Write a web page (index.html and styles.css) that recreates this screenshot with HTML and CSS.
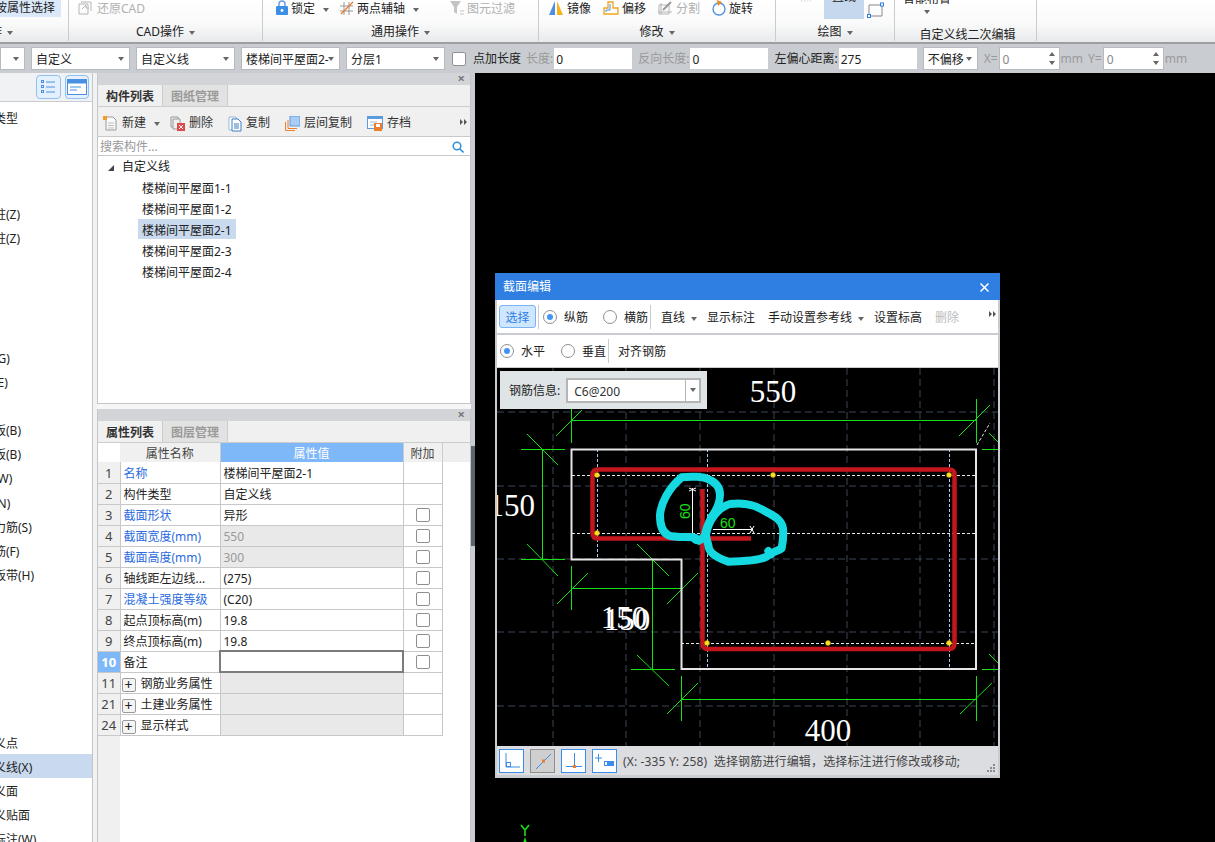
FILE: index.html
```html
<!DOCTYPE html>
<html lang="zh">
<head>
<meta charset="utf-8">
<title>截面编辑</title>
<link rel="stylesheet" href="styles.css">
</head>
<body>
<div class="app">
  <header class="ribbon">
    <section class="group g1">
      <div class="tools"><span class="hl-select">按属性选择</span></div>
      <div class="glabel glabel-left"><span class="cut">作</span><i class="caret"></i></div>
    </section>
    <section class="group g2">
      <div class="tools">
        <span class="tool off"><svg width="14" height="14" viewBox="0 0 14 14"><path d="M1 3h9v10H1zM3 1h10v9" fill="none" stroke="#b5b5b5"/><path d="M4 8l4-4v3h3" fill="none" stroke="#b5b5b5"/></svg>还原CAD</span>
      </div>
      <div class="glabel">CAD操作<i class="caret"></i></div>
    </section>
    <section class="group g3">
      <div class="tools">
        <span class="tool"><svg width="12" height="15" viewBox="0 0 12 15"><path d="M3 7V4a3 3 0 0 1 6 0v3" fill="none" stroke="#6f9fd8" stroke-width="1.5"/><rect y="6" width="12" height="9" rx="1" fill="#3d8fe6"/><circle cx="6" cy="10.5" r="1.4" fill="#fff"/></svg>锁定<i class="caret"></i></span>
        <span class="tool t-axis"><svg width="14" height="14" viewBox="0 0 14 14"><path d="M0 5h13M0 10h13M4 1v13M9 1v13" stroke="#999" fill="none"/><path d="M1 13L13 1" stroke="#e8792a" stroke-width="1.2"/></svg>两点辅轴<i class="caret"></i></span>
        <span class="tool off t-filter"><svg width="14" height="14" viewBox="0 0 14 14"><path d="M0 0h11L7 6v7l-3-2V6z" fill="#c4c4c4"/><path d="M10 10h4M10 13h4" stroke="#c4c4c4"/></svg>图元过滤</span>
      </div>
      <div class="glabel">通用操作<i class="caret"></i></div>
    </section>
    <section class="group g4">
      <div class="tools">
        <span class="tool"><svg width="16" height="15" viewBox="0 0 16 15"><path d="M7 1v14H1z" fill="#4a90e2"/><path d="M9 1v14h6z" fill="#f7b21c"/></svg>镜像</span>
        <span class="tool"><svg width="16" height="14" viewBox="0 0 16 14"><path d="M1 13V7h4V1h5v6h5v6z" fill="none" stroke="#f2a51d" stroke-width="1.3"/><path d="M3 11V9h4V3" fill="none" stroke="#4a90e2"/></svg>偏移</span>
        <span class="tool off"><svg width="15" height="14" viewBox="0 0 15 14"><path d="M1 4h10v9H1zM0 11h14M3 2v11" fill="none" stroke="#b5b5b5"/><path d="M5 9l8-8" stroke="#999" stroke-width="2"/></svg>分割</span>
        <span class="tool"><svg width="14" height="16" viewBox="0 0 14 16"><circle cx="7" cy="9" r="6" fill="none" stroke="#4a90e2" stroke-width="1.3"/><path d="M5 0l5 2-4 4z" fill="#f08a1d"/></svg>旋转</span>
      </div>
      <div class="glabel">修改<i class="caret"></i></div>
    </section>
    <section class="group g5">
      <div class="tools">
        <span class="faint"><span class="cut-text">点</span></span>
        <span class="hl-draw"><span class="cut-text">直线</span></span>
        <svg class="draw-rect" width="17" height="16" viewBox="0 0 17 16"><path d="M2 3h13v11H2z" fill="none" stroke="#888"/><rect x="13.500" y="1" width="3" height="3" fill="#fff" stroke="#2f7fe3"/><rect x="0.500" y="12.500" width="3" height="3" fill="#fff" stroke="#2f7fe3"/></svg>
      </div>
      <div class="glabel">绘图<i class="caret"></i></div>
    </section>
    <section class="group g6">
      <div class="cut-top">智能布置</div>
      <i class="caret caret-mid"></i>
      <div class="glabel glabel-low">自定义线二次编辑</div>
    </section>
    <div class="ribbon-rest"></div>
  </header>

  <div class="optbar">
    <div class="sel w25"><i class="caret"></i></div>
    <div class="sel w99">自定义<i class="caret"></i></div>
    <div class="sel w99">自定义线<i class="caret"></i></div>
    <div class="sel w99 nowrap">楼梯间平屋面2-<i class="caret"></i></div>
    <div class="sel w99">分层1<i class="caret"></i></div>
    <span class="check chk-opt"></span>
    <span class="olabel gap7">点加长度</span>
    <span class="olabel dim gap5">长度:</span>
    <span class="inp w78">0</span>
    <span class="olabel dim gap6">反向长度:</span>
    <span class="inp w78">0</span>
    <span class="olabel gap6">左偏心距离:</span>
    <span class="inp w78">275</span>
    <div class="sel w55 gap6">不偏移<i class="caret"></i></div>
    <span class="olabel dim gap6">X=</span>
    <span class="spin">0<i class="updown"></i></span>
    <span class="olabel dim">mm</span>
    <span class="olabel dim gap5">Y=</span>
    <span class="spin">0<i class="updown"></i></span>
    <span class="olabel dim">mm</span>
  </div>

  <main class="main">
    <aside class="nav">
      <div class="nav-head">
        <span class="nav-btn"><svg width="14" height="14" viewBox="0 0 14 14"><path d="M5 2h9M5 7h9M5 12h9" stroke="#4a90e2"/><rect x="0.500" y="0.500" width="2" height="2" fill="none" stroke="#4a90e2"/><rect x="0.500" y="5.500" width="2" height="2" fill="none" stroke="#4a90e2"/><rect x="0.500" y="10.500" width="2" height="2" fill="none" stroke="#4a90e2"/></svg></span>
        <span class="nav-btn"><svg width="20" height="16" viewBox="0 0 20 16"><rect x="0.500" y="0.500" width="19" height="15" fill="#fff" stroke="#4a90e2"/><rect x="0.500" y="0.500" width="19" height="4" fill="#4a90e2"/><path d="M3 8h11M3 11h7" stroke="#4a90e2"/></svg></span>
      </div>
      <ul class="nav-list">
        <li>类型</li><li></li><li></li><li></li>
        <li>柱(Z)</li><li>柱(Z)</li><li></li><li></li><li></li><li></li>
        <li>(G)</li><li>(E)</li><li></li>
        <li>板(B)</li><li>板(B)</li><li>(W)</li><li>(N)</li><li>力筋(S)</li><li>筋(F)</li><li>板带(H)</li>
        <li></li><li></li><li></li><li></li><li></li><li></li>
        <li>义点</li><li class="active">义线(X)</li><li>义面</li><li>义贴面</li><li>标注(W)</li>
      </ul>
    </aside>
    <div class="gutter"></div>

    <div class="panels">
      <section class="panel panel-top">
        <div class="panel-bar">×</div>
        <div class="tabs"><span class="tab on">构件列表</span><span class="tab">图纸管理</span></div>
        <div class="ptools">
          <span class="ptool"><svg width="14" height="15" viewBox="0 0 14 15"><path d="M3 1h7l3 3v10H3z" fill="#fafafa" stroke="#9a9a9a"/><path d="M5 7h6M5 9.500h6M5 12h6" stroke="#bbb"/><rect width="4" height="4" fill="#f39c2d"/></svg>新建<i class="caret"></i></span>
          <span class="ptool"><svg width="15" height="15" viewBox="0 0 15 15"><path d="M1 1h7v2M1 1v10h2" fill="none" stroke="#999"/><path d="M3 3h7v4M3 3v10h4" fill="none" stroke="#999"/><rect x="7" y="7" width="8" height="8" fill="#dd4a4a"/><path d="M9 9l4 4M13 9l-4 4" stroke="#fff"/></svg>删除</span>
          <span class="ptool"><svg width="14" height="16" viewBox="0 0 14 16"><path d="M1 1h7v13H1z" fill="#fff" stroke="#9bb8d8"/><path d="M4 3h6l3 3v9H4z" fill="#fff" stroke="#3d7fc8"/><path d="M6 8h5M6 10h5M6 12h5" stroke="#3d7fc8"/></svg>复制</span>
          <span class="ptool"><svg width="15" height="15" viewBox="0 0 15 15"><path d="M.5 6v8.500H10M3 4v8.500h9" fill="none" stroke="#ec7d2c"/><rect x="5" y="0" width="10" height="10" fill="#a9cdf5" stroke="#5b9be0"/></svg>层间复制</span>
          <span class="ptool"><svg width="16" height="15" viewBox="0 0 16 15"><rect x="0.500" y="0.500" width="15" height="12" fill="#fff" stroke="#5b9be0"/><path d="M0 1.500h16" stroke="#5b9be0" stroke-width="3"/><path d="M3 6h7M3 9h5" stroke="#9bb8d8"/><rect x="7" y="7" width="8" height="8" fill="#ec7d2c"/><rect x="9" y="8" width="4" height="3" fill="#fff"/></svg>存档</span>
          <svg class="more" width="7" height="6" viewBox="0 0 7 6"><path d="M0 0l3 3-3 3zM4 0l3 3-3 3z" fill="#555"/></svg>
        </div>
        <div class="search"><span>搜索构件...</span><svg width="12" height="12" viewBox="0 0 12 12"><circle cx="5" cy="5" r="3.800" fill="none" stroke="#2f8fd8" stroke-width="1.500"/><path d="M8 8l3.500 3.500" stroke="#2f8fd8" stroke-width="1.600"/></svg></div>
        <div class="tree">
          <div class="tree-root"><i class="tri"></i>自定义线</div>
          <div class="tree-item"><span>楼梯间平屋面1-1</span></div>
          <div class="tree-item"><span>楼梯间平屋面1-2</span></div>
          <div class="tree-item"><span class="picked">楼梯间平屋面2-1</span></div>
          <div class="tree-item"><span>楼梯间平屋面2-3</span></div>
          <div class="tree-item"><span>楼梯间平屋面2-4</span></div>
        </div>
      </section>

      <section class="panel panel-bottom">
        <div class="panel-bar">×</div>
        <div class="tabs"><span class="tab on">属性列表</span><span class="tab">图层管理</span></div>
        <div class="table-wrap">
          <table class="props">
            <thead><tr><th class="idx-h"></th><th class="c-name">属性名称</th><th class="c-val cur">属性值</th><th class="c-add">附加</th><th class="c-rest"></th></tr></thead>
            <tbody>
              <tr><td class="idx">1</td><td class="link">名称</td><td>楼梯间平屋面2-1</td><td></td></tr>
              <tr><td class="idx">2</td><td>构件类型</td><td>自定义线</td><td></td></tr>
              <tr><td class="idx">3</td><td class="link">截面形状</td><td>异形</td><td class="ck"><span class="check"></span></td></tr>
              <tr><td class="idx">4</td><td class="link">截面宽度(mm)</td><td class="ro">550</td><td class="ck"><span class="check"></span></td></tr>
              <tr><td class="idx">5</td><td class="link">截面高度(mm)</td><td class="ro">300</td><td class="ck"><span class="check"></span></td></tr>
              <tr><td class="idx">6</td><td>轴线距左边线...</td><td>(275)</td><td class="ck"><span class="check"></span></td></tr>
              <tr><td class="idx">7</td><td class="link">混凝土强度等级</td><td>(C20)</td><td class="ck"><span class="check"></span></td></tr>
              <tr><td class="idx">8</td><td>起点顶标高(m)</td><td>19.8</td><td class="ck"><span class="check"></span></td></tr>
              <tr><td class="idx">9</td><td>终点顶标高(m)</td><td>19.8</td><td class="ck"><span class="check"></span></td></tr>
              <tr><td class="idx cur-idx">10</td><td>备注</td><td class="editing"></td><td class="ck"><span class="check"></span></td></tr>
              <tr><td class="idx">11</td><td class="grp"><i class="plus">+</i>钢筋业务属性</td><td class="ro"></td><td></td></tr>
              <tr><td class="idx">21</td><td class="grp"><i class="plus">+</i>土建业务属性</td><td class="ro"></td><td></td></tr>
              <tr><td class="idx">24</td><td class="grp"><i class="plus">+</i>显示样式</td><td class="ro"></td><td></td></tr>
            </tbody>
          </table>
        </div>
      </section>
    </div>

    <div class="splitter"><i class="split-handle"></i></div>

    <div class="viewport">
      <svg class="axis" width="20" height="22" viewBox="0 0 20 22"><path d="M5 1l4 5 4-5M9 6v6" fill="none" stroke="#18e018" stroke-width="1.600"/><path d="M9 13l3 9H6z" fill="#18e018"/></svg>
    </div>
  </main>
</div>

<div class="dialog">
  <div class="dlg-title"><span>截面编辑</span><svg width="9" height="9" viewBox="0 0 9 9"><path d="M.5.500l8 8M8.500.500l-8 8" stroke="#fff" stroke-width="1.500"/></svg></div>
  <div class="dlg-bar bar-one">
    <span class="btn-sel">选择</span><i class="vsep"></i>
    <span class="radio on r-a"></span><span class="rtext">纵筋</span>
    <span class="radio r-b"></span><span class="rtext">横筋</span><i class="vsep s2"></i>
    <span class="act a-line">直线<i class="caret"></i></span>
    <span class="act a-show">显示标注</span>
    <span class="act a-hand">手动设置参考线<i class="caret"></i></span>
    <span class="act a-set">设置标高</span>
    <span class="act a-del">删除</span>
    <svg class="more dlg-more" width="7" height="6" viewBox="0 0 7 6"><path d="M0 0l3 3-3 3zM4 0l3 3-3 3z" fill="#555"/></svg>
  </div>
  <div class="dlg-bar bar-two">
    <span class="radio on r-c"></span><span class="rtext">水平</span>
    <span class="radio r-d"></span><span class="rtext">垂直</span><i class="vsep s2"></i>
    <span class="act a-align">对齐钢筋</span>
  </div>
  <div class="dlg-canvas">
    <svg class="drawing" width="501" height="378" viewBox="497 368 501 378">
      <g class="grid">
        <path d="M553 368V746M626 368V746M700 368V746M774 368V746M847 368V746M920 368V746M994 368V746M497 412H998M497 486H998M497 559H998M497 632H998M497 706H998"/>
      </g>
      <g class="guides">
        <path d="M572 475.500H975M572 533.500H975M681 643.500H975"/>
        <path class="blue" d="M597.500 449V559M707.500 449V669M949.500 449V669"/>
        <path d="M977 445L990 423"/>
      </g>
      <g class="dims">
        <path d="M571 420.500H976M571.500 408V443M976.500 399V443M556 436L582 410M959 436L990 405"/>
        <path d="M542.500 449V559M521 449.500H565M521 559.500H565M527 434L558 465M527 544L558 576"/>
        <path d="M571 588.500H681M571.500 566V610M681.500 566V610M557 604L588 573M667 604L698 573"/>
        <path d="M652.500 559V669M631 559.500H675M631 669.500H675M637 544L669 576M637 655L669 686"/>
        <path d="M681 699.500H976M681.500 676V721M976.500 676V721M667 714L698 683M960 714L992 683"/>
        <path d="M982 449.500H998M982 669.500H998M989 433L998 442M989 654L998 663"/>
      </g>
      <path class="outline" d="M571.500 449.500H976V669H681.500V559.500H571.500Z"/>
      <path class="rebar" d="M702.500 489V643Q702.500 649 708 649H949Q954.500 649 954.500 643V475Q954.500 469.500 949 469.500H598Q592.500 469.500 592.500 475V533Q592.500 538.500 598 538.500H751"/>
      <g class="pins">
        <circle cx="597" cy="475" r="2.500"/><circle cx="773" cy="475" r="2.500"/><circle cx="949" cy="475" r="2.500"/><circle cx="597" cy="533" r="2.500"/><circle cx="707" cy="643" r="2.500"/><circle cx="828" cy="643" r="2.500"/><circle cx="949" cy="643" r="2.500"/>
      </g>
      <path class="small-dim" d="M692.500 488V533M689 488L696 491M696 488L689 491M713 529.500H753M750 526L754 533M754 526L750 533"/>
      <text class="tiny" x="720" y="528">60</text>
      <text class="tiny" transform="translate(690 519) rotate(-90)">60</text>
      <g transform="translate(495 420) scale(.33333)">
        <path class="ink" d="M560 172C590 168 625 170 640 178C665 188 675 205 675 225C675 250 665 270 650 290C640 310 632 330 630 345C620 362 605 366 595 352C570 350 540 354 520 346C500 335 495 315 495 285C498 250 520 205 560 172Z"/>
        <path class="ink" d="M633 345C640 300 670 262 705 252C735 248 770 250 800 268C830 285 860 295 864 325C866 345 864 365 860 385C845 395 825 398 815 410C790 422 750 424 700 425C670 415 640 400 640 375C636 365 634 355 633 345Z"/>
        <path class="ink" d="M603 355L612 362M820 393L828 403"/>
      </g>
      <g class="labels">
        <text x="773" y="402" text-anchor="middle">550</text>
        <text x="828" y="741" text-anchor="middle">400</text>
        <text x="535" y="516" text-anchor="end">150</text>
        <text x="624" y="628" text-anchor="middle">150</text>
        <text x="627" y="630" text-anchor="middle">150</text>
      </g>
    </svg>
    <div class="rebar-info">
      <span class="info-label">钢筋信息:</span>
      <div class="combo"><span>C6@200</span><i class="combo-btn"><i class="caret"></i></i></div>
    </div>
  </div>
  <div class="dlg-status">
    <span class="snap"><svg width="18" height="18" viewBox="0 0 18 18"><path d="M3 1V15H17" fill="none" stroke="#3a8dea"/><rect x="3.500" y="10.500" width="4" height="4" fill="none" stroke="#3a8dea"/></svg></span>
    <span class="snap snap-on"><svg width="18" height="18" viewBox="0 0 18 18"><path d="M2 17L17 2" stroke="#3a8dea"/><rect x="8" y="7.500" width="3" height="3" fill="#ec7d2c"/></svg></span>
    <span class="snap"><svg width="18" height="18" viewBox="0 0 18 18"><path d="M1 14.500H17M9.500 1V15" stroke="#3a8dea"/><rect x="8" y="13" width="3" height="3" fill="#ec7d2c"/></svg></span>
    <span class="snap"><svg width="20" height="18" viewBox="0 0 20 18"><path d="M0 6H7M3.500 2V10" stroke="#3a8dea"/><rect x="9" y="9" width="10" height="5" fill="#3a8dea"/><rect x="10" y="10" width="2" height="3" fill="#fff"/></svg></span>
    <span class="status-text">(X: -335 Y: 258)&nbsp; 选择钢筋进行编辑，选择标注进行修改或移动;</span>
    <svg class="grip" width="9" height="9" viewBox="0 0 9 9"><path d="M7 0h2v2H7zM4 3h2v2H4zM7 3h2v2H7zM1 6h2v2H1zM4 6h2v2H4zM7 6h2v2H7z" fill="#8a8a8a"/></svg>
  </div>
</div>
</body>
</html>
```
FILE: styles.css
```css
* { box-sizing: border-box; }
html, body { margin: 0; padding: 0; height: 100%; overflow: hidden; }
body { font: 12px/1.2 "Noto Sans", "Noto Sans CJK SC", sans-serif; color: #222; background: #000; }
i { font-style: normal; }
ul { margin: 0; padding: 0; list-style: none; }

.app { width: 1215px; height: 842px; display: flex; flex-direction: column; overflow: hidden; }

.caret { display: inline-block; width: 0; height: 0; border: 3.500px solid transparent; border-top: 4px solid #666; border-bottom: 0; }

/* ribbon */
.ribbon { height: 44px; flex: none; display: flex; background: linear-gradient(#fff, #fafafa 55%, #e8eaeb); border-bottom: 2px solid #9c9ea1; overflow: hidden; }
.group { height: 41px; border-right: 1px solid #c9cbcd; flex: none; display: flex; flex-direction: column; }
.g1 { width: 69px; }
.g2 { width: 194px; }
.g3 { width: 276px; }
.g4 { width: 237px; }
.g5 { width: 119px; }
.g6 { width: 142px; }
.ribbon-rest { flex: 1; }
.tools { height: 19px; display: flex; align-items: flex-start; flex: none; }
.tool { display: inline-flex; align-items: center; gap: 3px; height: 19px; white-space: nowrap; }
.tool svg { flex: none; margin-top: -4px; }
.tool .caret { margin-left: 5px; }
.off { color: #b0b0b0; }
.hl-select { display: block; width: 61px; height: 17px; background: #dbe8f9; text-indent: -5px; line-height: 15px; white-space: nowrap; overflow: hidden; }
.glabel { height: 22px; line-height: 26px; text-align: center; white-space: nowrap; }
.glabel .caret { margin-left: 5px; vertical-align: 1px; }
.glabel-left { text-align: left; }
.cut { margin-left: -10px; }
.g2 .tools { padding-left: 9px; }
.g2 .tool { gap: 5px; }
.g3 .tools { padding-left: 13px; }
.t-axis { margin-left: 11px; }
.t-filter { margin-left: 31px; }
.g4 .tools { padding-left: 9px; gap: 12px; }
.faint { color: #ddd; margin-left: 24px; width: 24px; height: 10px; overflow: hidden; }
.hl-draw { width: 40px; height: 19px; background: #c6d8ee; text-align: center; overflow: hidden; }
.cut-text { display: block; margin-top: -10px; }
.draw-rect { margin: 2px 0 0 3px; }
.cut-top { height: 8px; margin-left: 8px; line-height: 0; overflow: hidden; }
.caret-mid { align-self: flex-start; margin: 6px 0 0 29px; }
.glabel-low { margin-top: 12px; height: 15px; line-height: 17px; padding-left: 4px; }

/* option bar */
.optbar { height: 29px; flex: none; display: flex; align-items: center; gap: 6px; background: #c9ccd1; white-space: nowrap; }
.sel { position: relative; height: 23px; line-height: 23px; padding-left: 4px; background: #fff; border: 1px solid #b8babd; flex: none; overflow: hidden; }
.sel .caret { position: absolute; right: 5px; top: 9px; }
.w25 { width: 25px; }
.w99 { width: 99px; }
.w55 { width: 55px; }
.nowrap { padding-right: 12px; }
.check { display: inline-block; width: 14px; height: 14px; border: 1px solid #8f8f8f; border-radius: 2px; background: #fff; }
.chk-opt { flex: none; margin-left: 1px; }
.olabel { flex: none; margin-left: -5px; padding-top: 2px; color: #222; }
.dim { color: #9a9a9a; }
.gap7 { margin-left: 1px; }
.gap5 { margin-left: -1px; }
.gap6 { margin-left: 0; }
.inp { flex: none; width: 78px; height: 21px; line-height: 23px; padding-left: 2px; background: #fff; margin-left: -5px; }
.w78 { width: 78px; }
.spin { position: relative; flex: none; width: 61px; height: 23px; line-height: 23px; padding-left: 3px; background: #fff; border: 1px solid #b8babd; color: #888; margin-left: -5px; }
.updown { position: absolute; right: 3px; top: 4px; width: 7px; height: 13px; }
.updown::before, .updown::after { content: ""; position: absolute; left: 0; border: 3px solid transparent; }
.updown::before { top: 0; border-bottom: 4px solid #666; border-top: 0; }
.updown::after { bottom: 0; border-top: 4px solid #666; border-bottom: 0; }

/* main */
.main { flex: 1; display: flex; min-height: 0; }
.nav { width: 93px; flex: none; background: #fff; border-right: 1px solid #c4c6c9; overflow: hidden; }
.nav-head { height: 29px; padding: 2px 3px 0 36px; display: flex; gap: 4px; background: #f1f2f3; border-bottom: 1px solid #c9cbce; }
.nav-btn { width: 25px; height: 24px; display: flex; align-items: center; justify-content: center; background: #e4f0fd; border: 1px solid #8fc0f3; border-radius: 4px; }
.nav-list { padding-top: 3px; }
.nav-list li { height: 24.04px; line-height: 27px; text-indent: -6px; white-space: nowrap; overflow: hidden; }
.nav-list .active { background: #c9d9ee; }
.gutter { width: 4px; flex: none; background: #f2f2f2; }
.panels { width: 374px; flex: none; display: flex; flex-direction: column; background: #f6f6f6; }
.panel { display: flex; flex-direction: column; border-left: 1px solid #c4c6c9; border-right: 1px solid #c4c6c9; background: #fff; }
.panel-top { height: 331px; border-bottom: 1px solid #c4c6c9; flex: none; }
.panel-bottom { flex: 1; margin-top: 5px; min-height: 0; }
.panel-bar { height: 12px; flex: none; text-align: right; line-height: 11px; padding-right: 5px; font-size: 13px; font-weight: 700; color: #777; background: #d2d4d8; }
.tabs { height: 22px; flex: none; display: flex; background: #f0f0f0; border-bottom: 1px solid #ccc; }
.tab { width: 65px; line-height: 23px; text-align: center; font-weight: 700; color: #9a9a9a; background: #e2e2e2; border-right: 1px solid #ccc; }
.tab.on { color: #333; background: #f0f0f0; }
.ptools { height: 30px; flex: none; display: flex; align-items: center; padding: 4px 0 0 5px; gap: 15px; background: #f0f0f0; border-bottom: 1px solid #c9c9c9; position: relative; }
.ptool { display: inline-flex; align-items: center; gap: 4px; color: #333; white-space: nowrap; }
.ptool .caret { margin: 0 -5px 0 3px; }
.ptool svg { flex: none; }
.ptool:first-child { gap: 5px; }
.more { position: absolute; right: 3px; top: 12px; }
.search { height: 19px; flex: none; display: flex; justify-content: space-between; align-items: center; padding: 2px 6px 0 2px; color: #999; border-bottom: 1px solid #c9c9c9; }
.tree { flex: 1; }
.tree-root { height: 21px; padding: 2px 0 0 10px; display: flex; align-items: center; }
.tri { width: 0; height: 0; margin-right: 8px; border-style: solid; border-width: 0 0 6px 6px; border-color: transparent transparent #444 transparent; }
.tree-item { height: 21px; line-height: 24px; padding-left: 40px; }
.tree-item span { display: inline-block; width: 98px; height: 20px; padding-left: 4px; white-space: nowrap; vertical-align: top; }
.tree-item .picked { background: #c9d9ee; }

/* properties */
.table-wrap { flex: 1; background: linear-gradient(90deg, #f0f0f0 22px, #fff 22px); min-height: 0; }
.props { border-collapse: collapse; table-layout: fixed; width: 372px; }
.props th { height: 19px; font-weight: 400; padding: 3px 0 0; background: #f0f0f0; color: #444; border-right: 1px solid #ccc; }
.props .idx-h { width: 22px; background: #fff; border-right: 0; }
.c-name { width: 100px; }
.c-val { width: 183px; }
.c-add { width: 39px; }
.props .c-rest { background: #eee; border: 0; }
.props .cur { background: #7fb8f8; color: #fff; }
.props td { height: 21px; padding: 4px 3px 0; border: 1px solid #c8c8c8; border-top: 0; white-space: nowrap; overflow: hidden; color: #222; background: #fff; }
.props .idx { padding: 3px 0 0; text-align: center; background: #f0f0f0; border-left: 0; border-right: 0; color: #444; font-size: 13px; }
.props .cur-idx { background: #7fb8f8; color: #fff; font-weight: 700; }
.props .link { color: #2a6be0; }
.props .ro { background: #e9e9e9; color: #999; }
.props .editing { border: 2px solid #7c7c7c; }
.props .ck { text-align: center; padding: 1px 0 0; line-height: 0; }
.props .grp { padding-left: 1px; }
.plus { display: inline-block; width: 14px; height: 14px; margin-right: 5px; line-height: 11px; text-align: center; font-size: 14px; border: 1px solid #999; border-radius: 2px; background: #f4f4f4; vertical-align: -2px; }

.splitter { width: 4px; flex: none; background: #c9ccd1; position: relative; }
.split-handle { position: absolute; left: 0; top: 373px; width: 4px; height: 100px; background: #5a6570; }
.viewport { flex: 1; background: #000; position: relative; }
.axis { position: absolute; left: 41px; top: 751px; }

/* dialog */
.dialog { position: absolute; left: 495px; top: 273px; width: 505px; height: 505px; padding: 0 2px 3px; display: flex; flex-direction: column; background: #c9ccd1; }
.dlg-title { height: 27px; margin: 0 -2px; padding: 2px 11px 0 8px; flex: none; display: flex; justify-content: space-between; align-items: center; color: #fff; background: #2f7fe3; }
.dlg-bar { position: relative; display: flex; align-items: center; flex: none; background: #fff; white-space: nowrap; }
.bar-one { height: 33px; margin-bottom: 2px; padding-left: 2px; }
.bar-two { height: 32px; margin-bottom: 1px; }
.btn-sel { width: 37px; height: 23px; line-height: 24px; text-align: center; color: #2f7fe3; background: #cfe6ff; border: 1px solid #7ab4f5; border-radius: 3px; }
.vsep { width: 1px; height: 24px; margin-left: 2px; background: #c9ccd1; flex: none; }
.radio { width: 14px; height: 14px; flex: none; border: 1px solid #8f8f8f; border-radius: 50%; background: #fff; position: relative; }
.radio.on::after { content: ""; position: absolute; left: 3px; top: 3px; width: 6px; height: 6px; border-radius: 50%; background: #3f97f5; }
.rtext { margin-left: 7px; padding-top: 3px; }
.r-a { margin-left: 4px; }
.r-b { margin-left: 15px; }
.r-c { margin-left: 3px; }
.r-d { margin-left: 16px; }
.s2 { margin-left: 2px; }
.act { flex: none; padding-top: 3px; }
.act .caret { margin-left: 6px; vertical-align: 1px; }
.a-line { margin-left: 10px; }
.a-show { margin-left: 10px; }
.a-hand { margin-left: 13px; }
.a-set { margin-left: 10px; }
.a-del { margin-left: 13px; color: #bbb; }
.a-align { margin-left: 9px; }
.dlg-more { right: 2px; top: 11px; }
.dlg-canvas { position: relative; height: 378px; flex: none; background: #000; overflow: hidden; }
.drawing { display: block; }
.drawing path, .drawing circle { fill: none; }
.grid path { stroke: #3d4555; stroke-dasharray: 7 4; }
.guides path { stroke: #e8e8e8; stroke-dasharray: 3 2; }
.guides .blue { stroke: #a9cdf5; }
.dims path { stroke: #16e016; }
.drawing .outline { stroke: #e6e6e6; stroke-width: 2; }
.drawing .rebar { stroke: #c5161d; stroke-width: 4.500; }
.drawing .pins circle { fill: #ffe020; stroke: #b89800; stroke-width: .5; }
.drawing .small-dim { stroke: #fff; }
.tiny { font: 14px "Liberation Sans", sans-serif; fill: #16e016; }
.drawing .ink { stroke: #15d9e0; stroke-width: 24; stroke-linejoin: round; stroke-linecap: round; }
.labels text { font: 31px "Liberation Serif", serif; fill: #fff; }
.rebar-info { position: absolute; left: 3px; top: 3px; width: 207px; height: 38px; display: flex; align-items: center; gap: 6px; padding-left: 9px; background: #dfe5e6; }
.info-label { padding-top: 3px; }
.combo { width: 135px; height: 25px; display: flex; justify-content: space-between; line-height: 23px; padding-left: 6px; background: #fff; border: 2px solid #b5b5b5; color: #333; }
.combo-btn { width: 14px; border-left: 1px solid #b5b5b5; display: flex; align-items: center; justify-content: center; }
.dlg-status { flex: 1; display: flex; align-items: center; gap: 6px; padding: 0 2px; background: #dcdde0; position: relative; }
.snap { width: 25px; height: 24px; flex: none; display: flex; align-items: center; justify-content: center; background: #fff; border: 1px solid #3a8dea; }
.snap-on { background: #cfcfcf; border-color: #8e8e8e; }
.status-text { padding-top: 3px; color: #444; white-space: nowrap; letter-spacing: .15px; }
.grip { position: absolute; right: 3px; bottom: 2px; }
```
